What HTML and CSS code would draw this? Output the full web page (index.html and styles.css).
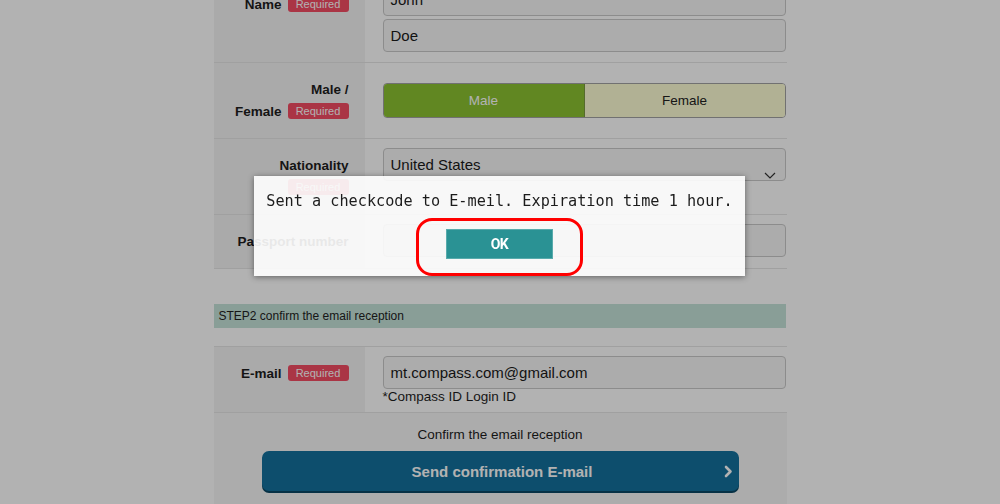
FILE: index.html
```html
<!DOCTYPE html>
<html lang="en">
<head>
<meta charset="utf-8">
<title>Registration</title>
<link rel="stylesheet" href="styles.css">
</head>
<body>
<main class="page">
  <section class="form-table">
    <div class="row">
      <div class="label label--name">Name<span class="badge">Required</span></div>
      <div class="field field--stack">
        <div class="input">John</div>
        <div class="input">Doe</div>
      </div>
    </div>
    <div class="row">
      <div class="label">Male /<br>Female<span class="badge">Required</span></div>
      <div class="field">
        <div class="segment">
          <div class="seg seg--on">Male</div>
          <div class="seg">Female</div>
        </div>
      </div>
    </div>
    <div class="row">
      <div class="label">Nationality<br><span class="badge badge--solo">Required</span></div>
      <div class="field">
        <div class="input select">United States
          <svg class="select-caret" width="12" height="7" viewBox="0 0 12 7"><polyline points="1,1 6,6 11,1" fill="none" stroke="#333" stroke-width="1.2"/></svg>
        </div>
      </div>
    </div>
    <div class="row">
      <div class="label">Passport number</div>
      <div class="field">
        <div class="input"></div>
      </div>
    </div>
  </section>

  <div class="step">STEP2 confirm the email reception</div>

  <section class="form-table form-table--top">
    <div class="row">
      <div class="label">E-mail<span class="badge">Required</span></div>
      <div class="field field--email">
        <div class="input">mt.compass.com@gmail.com</div>
        <div class="hint">*Compass ID Login ID</div>
      </div>
    </div>
  </section>

  <section class="confirm">
    <p class="confirm-text">Confirm the email reception</p>
    <button class="send" type="button">
      <span></span>
      <span class="send-label">Send confirmation E-mail</span>
      <svg class="send-caret" width="9" height="13" viewBox="0 0 9 13"><polyline points="2,2 6.5,6.5 2,11" fill="none" stroke="#fff" stroke-width="2.6" stroke-linecap="round" stroke-linejoin="round"/></svg>
    </button>
  </section>
</main>

<div class="overlay"></div>

<div class="dialog" role="dialog">
  <p class="dialog-text">Sent a checkcode to E-meil. Expiration time 1 hour.</p>
  <button class="ok" type="button">OK</button>
  <div class="callout"></div>
</div>
</body>
</html>
```

FILE: styles.css
```css
* { box-sizing: border-box; }

html, body { margin: 0; }

body {
  background: #fff;
  font-family: "Liberation Sans", Arial, sans-serif;
  color: #222;
  overflow: hidden;
}

.page {
  width: 573px;
  margin: -26px auto 0;
}

.form-table--top {
  border-top: 1px solid #e6e6e6;
}

.row {
  display: flex;
  border-bottom: 1px solid #e6e6e6;
}

.label {
  width: 151px;
  flex: none;
  background: #f4f4f4;
  padding: 16px 16px 15px 6px;
  text-align: right;
  font-weight: bold;
  font-size: 13.5px;
  line-height: 22px;
  color: #1e1e1e;
}

.label--name { padding-top: 20px; }

.badge {
  display: inline-block;
  vertical-align: 1px;
  width: 61px;
  height: 16px;
  margin-left: 6px;
  border-radius: 3px;
  background: #f44c64;
  color: #fff;
  font-size: 11px;
  font-weight: normal;
  line-height: 16px;
  text-align: center;
}

.badge--solo { margin-left: 0; }

.field {
  flex: 1;
  background: #fff;
  padding: 9px 1px 10px 18px;
}

.field--stack {
  display: flex;
  flex-direction: column;
  gap: 3px;
}

.input {
  position: relative;
  height: 33px;
  border: 1px solid #c9c9c9;
  border-radius: 4px;
  background: #f7f7f7;
  padding: 0 7px;
  font-size: 15px;
  line-height: 31px;
  color: #1a1a1a;
}

.select-caret {
  position: absolute;
  right: 9px;
  bottom: 1px;
}

.segment {
  margin-top: 11px;
  height: 35px;
  display: grid;
  grid-template-columns: 201px 1fr;
  border: 1px solid #a3a3a3;
  border-radius: 4px;
  overflow: hidden;
  font-size: 13.5px;
}

.seg {
  display: flex;
  align-items: center;
  justify-content: center;
  background: #fefed4;
  color: #222;
}

.seg--on {
  background: #8cc232;
  color: #fff;
  border-right: 1px solid #7a9a40;
}

.step {
  margin: 35px 1px 18px 0;
  background: #c5e3d9;
  padding: 0 5px;
  font-size: 12px;
  line-height: 24px;
  color: #222;
}

.field--email {
  padding-bottom: 8px;
}

.hint {
  font-size: 13.5px;
  line-height: 15px;
  color: #1e1e1e;
}

.confirm {
  background: #f7f7f7;
  padding: 12px 0 20px;
  text-align: center;
}

.confirm-text {
  margin: 0;
  font-size: 13.5px;
  line-height: 20px;
  color: #1e1e1e;
}

.send {
  display: grid;
  grid-template-columns: 1fr auto 1fr;
  align-items: center;
  width: 477px;
  height: 40px;
  margin: 6px auto 0;
  padding: 0 6px 0 10px;
  border: 0;
  border-radius: 7px;
  background: #14709c;
  box-shadow: 0 2px 0 #0b4763;
  color: #fff;
  font-family: "Liberation Sans", Arial, sans-serif;
  font-weight: bold;
  font-size: 15px;
}

.send-caret { justify-self: end; }

.overlay {
  position: fixed;
  inset: 0;
  background: rgba(0, 0, 0, 0.3);
}

.dialog {
  position: fixed;
  top: 176px;
  left: 254px;
  width: 491px;
  height: 100px;
  padding-top: 15px;
  background: rgba(255, 255, 255, 0.9);
  box-shadow: 0 1px 6px rgba(0, 0, 0, 0.45);
  text-align: center;
}

.dialog-text {
  margin: 0;
  font-family: "DejaVu Sans Mono", monospace;
  font-size: 15.2px;
  line-height: 20px;
  color: #1c1c1c;
}

.ok {
  display: block;
  width: 107px;
  height: 30px;
  margin: 18px auto 0;
  border: 1px solid #58abac;
  background: #2a9294;
  color: #fff;
  font-family: Roboto, "DejaVu Sans", sans-serif;
  font-weight: bold;
  font-size: 14px;
  letter-spacing: -0.5px;
}

.callout {
  position: absolute;
  left: 162px;
  top: 42px;
  width: 167px;
  height: 58px;
  border: 3px solid #ff0000;
  border-radius: 16px;
}
```
